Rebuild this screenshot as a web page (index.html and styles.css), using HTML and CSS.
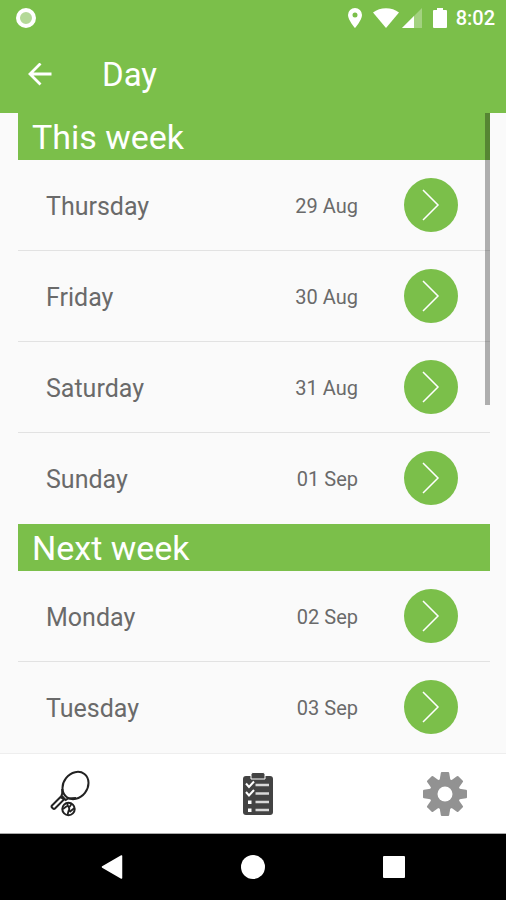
FILE: index.html
```html
<!DOCTYPE html>
<html lang="en">
<head>
  <meta charset="UTF-8" />
  <meta name="viewport" content="width=device-width, initial-scale=1.0"/>
  <title>Day</title>
  <link rel="stylesheet" href="styles.css">
</head>
<body>

  <header class="top">
    <div class="status-bar">
      <span class="record-dot"></span>
      <div class="status-icons">
        <svg width="16" height="22" viewBox="0 0 16 22" fill="#fff"><path fill-rule="evenodd" d="M8 1a7 7 0 0 0-7 7c0 5 7 13 7 13s7-8 7-13a7 7 0 0 0-7-7zm0 4.500a2.500 2.500 0 1 1 0 5 2.500 2.500 0 0 1 0-5z"/></svg>
        <svg width="26" height="22" viewBox="0 0 26 22" fill="#fff"><path d="M0 5.500C7-.3 19-.3 26 5.500L13 21z"/></svg>
        <svg width="22" height="22" viewBox="0 0 22 22" fill="#fff"><path d="M21 1v20H1z" opacity=".3"/><path d="M13 9v12H1z"/></svg>
        <svg class="battery" width="14" height="22" viewBox="0 0 14 22" fill="#fff"><path d="M4 1h6v2h3q1 0 1 1v16q0 1-1 1H1q-1 0-1-1V4q0-1 1-1h3z"/></svg>
        <span class="clock">8:02</span>
      </div>
    </div>
    <div class="app-bar">
      <button class="back" aria-label="Back">
        <svg width="24" height="24" viewBox="0 0 24 24" fill="none" stroke="#fff" stroke-width="2.800"><path d="M23.500 11H2M12.500 .5L2 11l10.500 10.500"/></svg>
      </button>
      <h1>Day</h1>
    </div>
  </header>

  <main class="content">
    <div class="scrollbar"></div>
    <section class="week">
      <h2>This week</h2>
      <ul>
        <li><span class="day">Thursday</span><span class="date">29 Aug</span><button class="go" aria-label="Open Thursday"><svg width="18" height="34" viewBox="0 0 18 34"><path d="M1 2l15 15L1 32"/></svg></button></li>
        <li><span class="day">Friday</span><span class="date">30 Aug</span><button class="go" aria-label="Open Friday"><svg width="18" height="34" viewBox="0 0 18 34"><path d="M1 2l15 15L1 32"/></svg></button></li>
        <li><span class="day">Saturday</span><span class="date">31 Aug</span><button class="go" aria-label="Open Saturday"><svg width="18" height="34" viewBox="0 0 18 34"><path d="M1 2l15 15L1 32"/></svg></button></li>
        <li><span class="day">Sunday</span><span class="date">01 Sep</span><button class="go" aria-label="Open Sunday"><svg width="18" height="34" viewBox="0 0 18 34"><path d="M1 2l15 15L1 32"/></svg></button></li>
      </ul>
    </section>
    <section class="week">
      <h2>Next week</h2>
      <ul>
        <li><span class="day">Monday</span><span class="date">02 Sep</span><button class="go" aria-label="Open Monday"><svg width="18" height="34" viewBox="0 0 18 34"><path d="M1 2l15 15L1 32"/></svg></button></li>
        <li><span class="day">Tuesday</span><span class="date">03 Sep</span><button class="go" aria-label="Open Tuesday"><svg width="18" height="34" viewBox="0 0 18 34"><path d="M1 2l15 15L1 32"/></svg></button></li>
      </ul>
    </section>
  </main>

  <nav class="tabs">
    <a href="#" aria-label="Play">
      <svg width="44" height="48" viewBox="0 0 44 48" fill="none" stroke="#222" stroke-width="2">
        <ellipse cx="26.500" cy="15.500" rx="12" ry="14.500" transform="rotate(38 26.500 15.500)"/>
        <path d="M13.200 19v4.500l-1 3M27 28l-8 .5-3 2M12 25l4.500 5"/>
        <path d="M11.500 27L3 35.500q-1 1 0 2l1 1q1 1 2 0l9-9z"/>
        <circle cx="19.500" cy="39" r="6.200"/>
        <path d="M18.500 33c-1 4 4 5 1 8l-1 4M14 39l4-3M20.500 42l5-4M22.500 34l-2 3" stroke-width="1.800"/>
      </svg>
    </a>
    <a href="#" aria-label="Bookings">
      <svg width="32" height="44" viewBox="0 0 32 44" fill="#434343">
        <rect x="1" y="4" width="30" height="39" rx="3"/>
        <path d="M9 2.500q0-2 2-2h10q2 0 2 2V7H9z" stroke="#fff" stroke-width="1"/>
        <g fill="none" stroke="#d8d8d8" stroke-width="2">
          <path d="M13.500 13H27M13.500 21.500H27M13.500 30H27M13.500 38H27" stroke-width="2.400"/>
          <path d="M4 11.500l3 3.500 5-5.500M4 20l3 3.500 5-5.500" stroke="#fff"/>
        </g>
        <path d="M6 28.500h3.500V32H6zM6 36.500h3.500V40H6z" fill="#fff"/>
      </svg>
    </a>
    <a href="#" aria-label="Settings">
      <svg width="44" height="44" viewBox="0 0 44 44" fill="#929292">
        <g id="teeth">
          <path id="tooth" d="M16.500 9l1.300-8q.2-1 1-1h6.400q.8 0 1 1l1.300 8z"/>
          <use href="#tooth" transform="rotate(45 22 22)"/>
          <use href="#tooth" transform="rotate(90 22 22)"/>
          <use href="#tooth" transform="rotate(135 22 22)"/>
        </g>
        <use href="#teeth" transform="rotate(180 22 22)"/>
        <circle cx="22" cy="22" r="15.500"/>
        <circle cx="22" cy="22" r="7.500" fill="#fff"/>
      </svg>
    </a>
  </nav>

  <footer class="system-nav">
    <button aria-label="System back"><svg width="24" height="24" viewBox="0 0 24 24"><path d="M2.500 12L21.500 1v22z" stroke="#fff" stroke-width="1.500" stroke-linejoin="round"/></svg></button>
    <button aria-label="Home"><svg width="24" height="24" viewBox="0 0 24 24"><circle cx="12" cy="12" r="12"/></svg></button>
    <button aria-label="Recent apps"><svg width="24" height="24" viewBox="0 0 24 24"><rect x="1" y="1" width="22" height="22" rx="1"/></svg></button>
  </footer>

</body>
</html>
```
FILE: styles.css
```css
:root {
  --green: #7bbf4a;
  --bg: #fafafa;
  --text: #6a6a6a;
}

* {
  box-sizing: border-box;
  font-family: Roboto, sans-serif;
}

body {
  margin: 0;
  height: 100vh;
  display: flex;
  flex-direction: column;
  background: var(--bg);
  color: var(--text);
}

button {
  padding: 0;
  border: none;
  background: transparent;
  cursor: pointer;
}

svg {
  display: block;
}

h1, h2, ul {
  margin: 0;
  padding: 0;
  font-weight: 400;
}

.top {
  background: var(--green);
  color: #fff;
}

.status-bar {
  height: 36px;
  padding: 0 11px 0 16px;
  display: flex;
  align-items: center;
  justify-content: space-between;
}

.record-dot {
  width: 20px;
  height: 20px;
  border: 4px solid #fff;
  border-radius: 50%;
  background: #b4d998;
}

.status-icons {
  display: flex;
  align-items: center;
  gap: 10px;
}

.status-icons svg + svg {
  margin-right: -8px;
}

.status-icons .battery {
  margin-left: 8px;
}

.clock {
  margin-left: 7px;
  font-size: 20px;
  font-weight: 500;
}

.app-bar {
  height: 77px;
  padding: 0 28px;
  display: flex;
  align-items: center;
  gap: 50px;
}

.app-bar h1 {
  font-size: 33px;
}

.content {
  position: relative;
  flex: 1;
  min-height: 0;
  padding: 0 16px 0 18px;
  overflow-y: auto;
  scrollbar-width: none;
}

.scrollbar {
  position: absolute;
  top: 0;
  right: 16px;
  width: 5px;
  height: 292px;
  background: rgba(0, 0, 0, 0.3);
}

.week h2 {
  height: 47px;
  padding: 0 14px;
  background: var(--green);
  color: #fff;
  font-size: 34px;
  line-height: 49px;
}

.week ul {
  list-style: none;
}

.week li {
  height: 91px;
  padding: 0 32px 0 28px;
  display: flex;
  align-items: center;
  border-bottom: 1px solid #e2e2e2;
}

.week li:last-child {
  border-bottom-color: transparent;
}

.day,
.date {
  padding-top: 2px;
}

.day {
  flex: 1;
  font-size: 25px;
}

.date {
  margin-right: 46px;
  font-size: 20px;
}

.go {
  width: 54px;
  height: 54px;
  display: flex;
  align-items: center;
  justify-content: center;
  border-radius: 50%;
  background: var(--green);
}

.go path {
  fill: none;
  stroke: #fff;
  stroke-width: 1.5;
}

.tabs {
  height: 81px;
  padding: 0 39px 0 49px;
  display: flex;
  align-items: center;
  justify-content: space-between;
  background: #fff;
  border-top: 1px solid #eee;
  border-bottom: 1px solid #aaa;
}

.system-nav {
  height: 66px;
  padding: 0 100px;
  display: flex;
  align-items: center;
  justify-content: space-between;
  background: #000;
}

.system-nav svg {
  fill: #fff;
}
```
